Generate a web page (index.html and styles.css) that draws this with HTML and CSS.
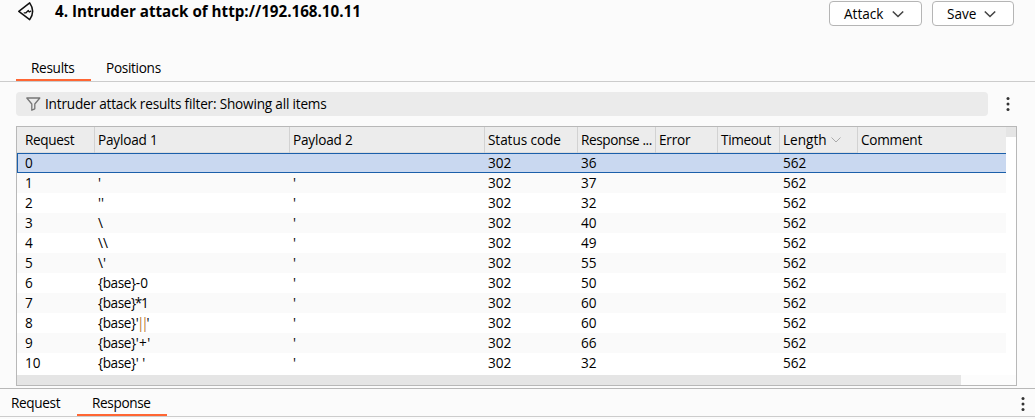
FILE: index.html
```html
<!DOCTYPE html>
<html lang="en">
<head>
<meta charset="utf-8">
<title>Intruder attack</title>
<link rel="stylesheet" href="styles.css">
</head>
<body>
<header class="titlebar">
  <svg class="logo" width="18" height="20" viewBox="0 0 18 20" fill="none" stroke="#111" stroke-width="1.5" stroke-linejoin="round" stroke-linecap="round"><path d="M1.8 10.4 12.7 1.9Q18.6 10.4 12.7 18.6Z"/><path d="M7.2 11.8H9L11.3 9.5 12.2 11 13.8 10.2" stroke-width="1.3"/></svg>
  <h1 class="title">4. Intruder attack of http://192.168.10.11</h1>
  <div class="actions">
    <button class="button attack"><span>Attack</span><svg width="12" height="8" viewBox="0 0 12 8" fill="none" stroke="#444" stroke-width="1.6"><path d="M.8 1.5 6 6.5 11.2 1.5"/></svg></button>
    <button class="button save"><span>Save</span><svg width="12" height="8" viewBox="0 0 12 8" fill="none" stroke="#444" stroke-width="1.6"><path d="M.8 1.5 6 6.5 11.2 1.5"/></svg></button>
  </div>
</header>
<nav class="tabs">
  <span class="tab active">Results</span>
  <span class="tab">Positions</span>
</nav>
<section class="filter-row">
  <div class="filter">
    <svg width="16" height="15" viewBox="0 0 16 15" fill="none" stroke="#777" stroke-width="1.3" stroke-linejoin="round"><path d="M1.8 1H14.8L9.8 7V11.8L6.8 13.2V7Z"/></svg>
    <span class="filter-text">Intruder attack results filter: Showing all items</span>
  </div>
  <svg class="dots" width="4" height="16" viewBox="0 0 4 16" fill="#333"><circle cx="2" cy="2.5" r="1.5"/><circle cx="2" cy="8" r="1.5"/><circle cx="2" cy="13.5" r="1.5"/></svg>
</section>
<section class="table">
  <div class="grid">
    <div class="row head"><span class="h-request">Request</span><span class="h-payload">Payload 1</span><span class="h-payload">Payload 2</span><span class="h-status">Status code</span><span class="h-response">Response ...</span><span class="h-error">Error</span><span class="h-timeout">Timeout</span><span class="h-length">Length<svg width="10" height="6" viewBox="0 0 10 6" fill="none" stroke="#aaa"><path d="M.5.5 5 5 9.5.5"/></svg></span><span class="h-comment">Comment</span></div>
    <div class="row selected"><span>0</span><span></span><span></span><span>302</span><span>36</span><span></span><span></span><span>562</span><span></span></div>
    <div class="row"><span>1</span><span>'</span><span>'</span><span>302</span><span>37</span><span></span><span></span><span>562</span><span></span></div>
    <div class="row"><span>2</span><span>''</span><span>'</span><span>302</span><span>32</span><span></span><span></span><span>562</span><span></span></div>
    <div class="row"><span>3</span><span>\</span><span>'</span><span>302</span><span>40</span><span></span><span></span><span>562</span><span></span></div>
    <div class="row"><span>4</span><span>\\</span><span>'</span><span>302</span><span>49</span><span></span><span></span><span>562</span><span></span></div>
    <div class="row"><span>5</span><span>\'</span><span>'</span><span>302</span><span>55</span><span></span><span></span><span>562</span><span></span></div>
    <div class="row"><span>6</span><span><span class="base">{base}</span>-0</span><span>'</span><span>302</span><span>50</span><span></span><span></span><span>562</span><span></span></div>
    <div class="row"><span>7</span><span><span class="base">{base}</span><span class="tight">*1</span></span><span>'</span><span>302</span><span>60</span><span></span><span></span><span>562</span><span></span></div>
    <div class="row"><span>8</span><span><span class="base">{base}</span><span class="quote">'</span><span class="pipes">||</span>'</span><span>'</span><span>302</span><span>60</span><span></span><span></span><span>562</span><span></span></div>
    <div class="row"><span>9</span><span><span class="base">{base}</span>'<span class="plus">+</span>'</span><span>'</span><span>302</span><span>66</span><span></span><span></span><span>562</span><span></span></div>
    <div class="row"><span>10</span><span><span class="base">{base}</span>' '</span><span>'</span><span>302</span><span>32</span><span></span><span></span><span>562</span><span></span></div>
  </div>
  <div class="vscroll"><div class="vthumb"></div></div>
  <div class="hscroll"><div class="hthumb"></div></div>
</section>
<footer class="message-tabs">
  <span class="message-tab request">Request</span>
  <span class="message-tab response">Response</span>
  <svg class="dots" width="4" height="16" viewBox="0 0 4 16" fill="#333"><circle cx="2" cy="2.5" r="1.5"/><circle cx="2" cy="8" r="1.5"/><circle cx="2" cy="13.5" r="1.5"/></svg>
</footer>
</body>
</html>
```
FILE: styles.css
```css
* { box-sizing: border-box; }
body {
  margin: 0;
  height: 419px;
  overflow: hidden;
  background: #fbfbfb;
  color: #000;
  font: 13.6px/20px "Open Sans", "Noto Sans", sans-serif;
  white-space: nowrap;
}
svg { display: block; flex: none; }
.titlebar { display: flex; height: 56px; padding: 1px 21px 0 17px; }
.title { margin: 0 0 0 20px; font-size: 15.2px; line-height: 20px; font-weight: 700; letter-spacing: -.01px; }
.actions { display: flex; gap: 10px; margin-left: auto; }
.button {
  display: flex;
  align-items: center;
  justify-content: space-between;
  height: 25px;
  padding: 0 17px 0 14px;
  border: 1px solid #b5b5b5;
  border-radius: 4px;
  background: #fff;
  color: #000;
  font: inherit;
}
.attack { width: 93px; }
.save { width: 82px; }
.tabs { display: flex; height: 26px; padding-left: 16px; border-bottom: 1px solid #ccc; }
.tab { width: 75px; height: 25px; padding: 2px 0 0 15px; border-bottom: 2px solid transparent; letter-spacing: -.3px; }
.tab.active { border-color: #ff6633; }
.filter-row { display: flex; align-items: center; height: 44px; padding: 0 25px 0 16px; }
.filter { display: flex; align-items: center; width: 972px; height: 24px; padding-left: 9px; gap: 4px; border-radius: 4px; background: #ebebeb; }
.filter-text { letter-spacing: -.19px; }
.filter-row .dots { margin-left: 17.5px; }
.table {
  display: grid;
  grid-template-columns: 989px 10px;
  grid-template-rows: 248px 10px;
  width: 1001px;
  height: 260px;
  margin-left: 16px;
  border: 1px solid #b8b8b8;
  background: #fff;
}
.row { display: grid; grid-template-columns: 77px 195px 195px 93px 78px 62px 62px 78px 149px; height: 20px; }
.row > span { padding-left: 4px; }
.row > span:first-child { padding-left: 8px; }
.row:nth-child(odd) { background: #fafafa; }
.row.head { height: 26px; background: #ececec; border-bottom: 1px solid #ddd; line-height: 26px; }
.head > span + span { border-left: 1px solid #d2d2d2; padding-left: 3px; }
.h-request { letter-spacing: -.35px; }
.h-payload { letter-spacing: -.18px; }
.h-status { letter-spacing: -.08px; }
.h-response { letter-spacing: -.4px; }
.h-error { letter-spacing: -.2px; }
.h-timeout { letter-spacing: -.35px; }
.h-length { display: flex; align-items: center; gap: 4px; }
.h-comment { letter-spacing: -.25px; }
.row.selected { background: #c9d8f0; box-shadow: inset 1px 0 #1b5faa, inset 0 1px #1b5faa, inset 0 -1px #1b5faa; }
.row:nth-child(2) { background: #c9d8f0; }
.row:nth-child(odd) > span:last-child { background: #fafafa; }
.base { letter-spacing: -.4px; }
.tight { letter-spacing: -1.2px; }
.tight { margin-left: -1px; }
.quote { letter-spacing: -.5px; }
.pipes { color: #b87931; letter-spacing: -3.3px; margin: 0 1px 0 -1.2px; }
.plus { margin: 0 .3px; }
.vscroll { background: #fff; }
.vthumb { height: 10px; background: #e5e5e5; }
.hscroll { grid-column: 1 / -1; background: #fcfcfc; }
.hthumb { width: 944px; height: 10px; background: #e5e5e5; }
.message-tabs { display: flex; height: 29px; margin-top: 2px; padding-right: 10.5px; border-top: 1px solid #b8b8b8; border-bottom: 1px solid #ccc; }
.message-tab { height: 27px; padding-top: 4px; border-bottom: 2px solid transparent; letter-spacing: -.35px; }
.request { width: 77px; padding-left: 11px; }
.response { width: 90px; padding-left: 15px; border-color: #ff6633; }
.message-tabs .dots { margin: 7px 0 0 auto; }
.head > span:last-child { background: #ececec !important; }
```
